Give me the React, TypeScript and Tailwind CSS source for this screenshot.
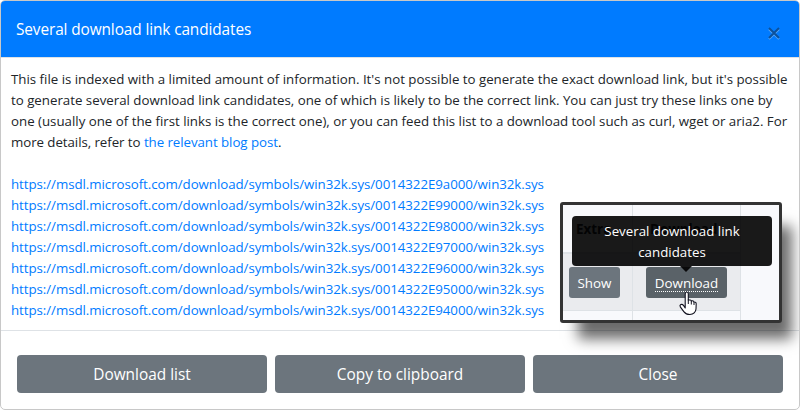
import React from "react";

const links = ["9a", "99", "98", "97", "96", "95", "94"].map(
  (s) => `https://msdl.microsoft.com/download/symbols/win32k.sys/0014322E${s}000/win32k.sys`
);

function FooterButton({ children }: { children: React.ReactNode }) {
  return (
    <button className="h-[38px] w-[250px] rounded bg-[#6c757d] pt-px text-[15.4px] text-white">
      {children}
    </button>
  );
}

function Pointer() {
  return (
    <svg className="absolute left-[115px] top-[86px]" width="20" height="26" viewBox="0 0 20 26">
      <path
        d="M7.2 17 L7.2 3 Q7.2 1 8.7 1 Q10.3 1 10.3 3 L10.3 9 L12.2 9 Q13.2 9.2 13.4 10 Q15.5 9.3 16 11 Q18.2 10.8 18.2 13 L18 18 Q17.5 23 11.8 23.5 Q8 23.5 6 20.8 L2.3 15.9 Q1.4 14.3 2.8 13.5 Q4.3 12.9 5.5 14.4 Z"
        fill="white"
        stroke="#12121f"
        strokeWidth="1.1"
        strokeLinejoin="round"
      />
      <path d="M10.3 8.5V13M13.3 10V13.5M16 11V14" stroke="#12121f" strokeWidth="1" />
    </svg>
  );
}

function Preview() {
  return (
    <div className="absolute left-[559px] top-[201px] h-[121px] w-[222px] rounded-[3px] border-[3px] border-[#333] bg-[#f8f9fc] shadow-[14px_20px_13px_-4px_rgba(0,0,0,0.58)]">
      <div className="grid h-[115px] w-[178px] grid-cols-[70px_108px] grid-rows-[49px_57px_9px] text-[13.4px]">
        <div className="border-r border-b-2 border-[#dee2e6] pt-[14px] pl-[13px] leading-5 font-bold">Extra</div>
        <div className="border-r border-b-2 border-[#dee2e6] pt-[14px] pl-[17px] leading-5 font-bold">Download</div>
        <div className="border-r border-b border-[#dee2e6] bg-[#eaebee] pt-[13px] pl-[6px]">
          <button className="h-[31px] w-[51px] rounded-[3px] bg-[#6c757d] pt-px text-white">Show</button>
        </div>
        <div className="border-r border-b border-[#dee2e6] bg-[#eaebee] pt-[13px] pl-[13px]">
          <button className="h-[31px] w-[81px] rounded-[3px] bg-[#5a6268] pt-px text-white">
            <span className="inline-block h-[18px] border-b border-dotted border-white leading-[19px]">Download</span>
          </button>
        </div>
        <div className="border-r border-[#dee2e6]" />
        <div className="border-r border-[#dee2e6]" />
      </div>
      <div className="absolute left-[9px] top-[11px] h-[50px] w-[200px] rounded bg-black/90 pt-[5px] text-center text-[13.3px] leading-[21px] text-white">
        Several download link
        <br />
        candidates
        <div className="absolute left-[108px] top-[50px] border-x-[6px] border-t-[6px] border-x-transparent border-t-black/90" />
      </div>
      <Pointer />
    </div>
  );
}

export default function App() {
  return (
    <div className="relative flex h-[410px] w-[800px] flex-col overflow-hidden rounded-[5px] border border-[#c8c8c8] bg-white font-['Open_Sans',sans-serif] text-[#212529]">
      <header className="flex h-[57px] shrink-0 items-center justify-between border-b border-[#dee2e6] bg-[#007bff] pr-[18px] pl-[15px]">
        <h1 className="pt-[2px] text-[15.4px] tracking-[-0.11px] whitespace-nowrap text-white">Several download link candidates</h1>
        <svg className="mt-[8px]" width="14" height="14" viewBox="0 0 14 14" fill="none" strokeWidth="2">
          <path d="M2 3.3L12 13M12 3.3L2 13" stroke="#5ba8f8" />
          <path d="M2 2L12 12M12 2L2 12" stroke="#0b519c" />
        </svg>
      </header>
      <main className="flex h-[273px] shrink-0 flex-col border-b border-[#dee2e6] pt-[11px] pl-[10px] text-[13.3px] leading-[21px] tracking-[-0.01px] whitespace-nowrap">
        <p className="w-max">This file is indexed with a limited amount of information. It's not possible to generate the exact download link, but it's possible</p>
        <p className="w-max">to generate several download link candidates, one of which is likely to be the correct link. You can just try these links one by</p>
        <p className="w-max">one (usually one of the first links is the correct one), or you can feed this list to a download tool such as curl, wget or aria2. For</p>
        <p className="mb-[21px] w-max tracking-[-0.06px]">more details, refer to <a className="text-[#007bff]">the relevant blog post</a>.</p>
        {links.map((l) => (
          <a key={l} className="w-max tracking-[-0.055px] text-[#007bff]">{l}</a>
        ))}
      </main>
      <footer className="flex gap-2 pt-6 pl-4">
        <FooterButton>Download list</FooterButton>
        <FooterButton>Copy to clipboard</FooterButton>
        <FooterButton>Close</FooterButton>
      </footer>
      <Preview />
    </div>
  );
}
